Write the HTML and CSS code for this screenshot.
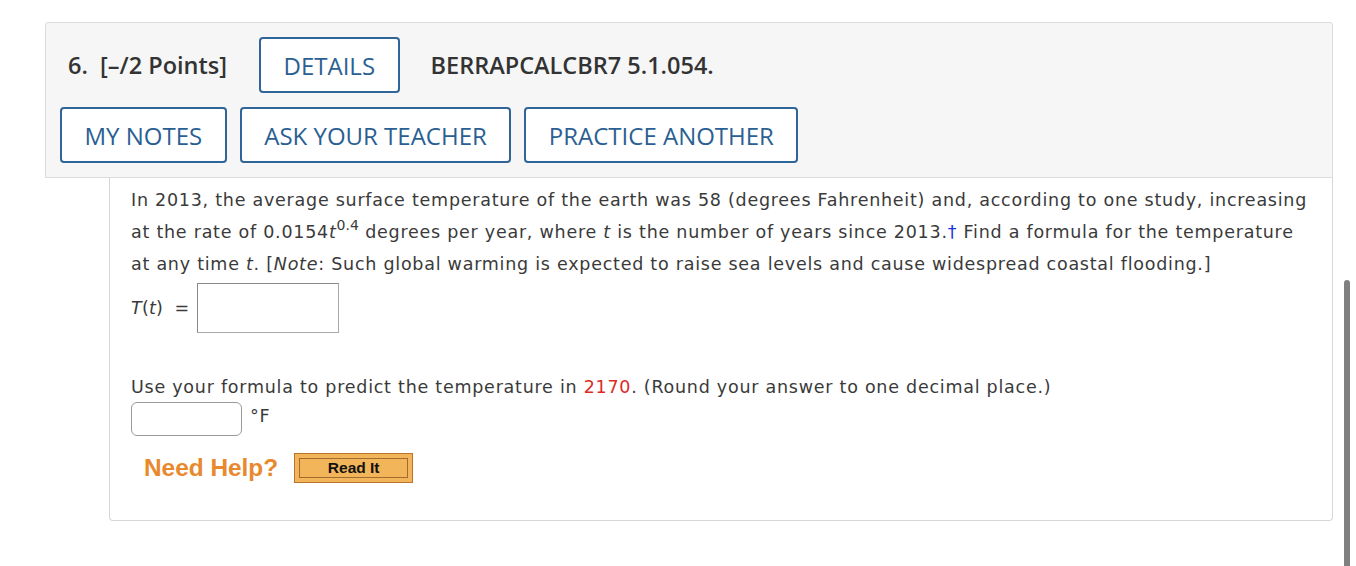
FILE: index.html
```html
<!DOCTYPE html>
<html>
<head>
<meta charset="utf-8">
<link rel="stylesheet" href="styles.css">
</head>
<body>
<div class="question">
  <div class="q-header">
    <div class="q-row">
      <span class="q-num">6.&nbsp; [–/2 Points]</span>
      <button class="btn">DETAILS</button>
      <span class="q-code">BERRAPCALCBR7 5.1.054.</span>
    </div>
    <div class="q-row q-actions">
      <button class="btn btn-notes">MY NOTES</button>
      <button class="btn">ASK YOUR TEACHER</button>
      <button class="btn">PRACTICE ANOTHER</button>
    </div>
  </div>
  <div class="q-body">
    <p class="q-text">In 2013, the average surface temperature of the earth was 58 (degrees Fahrenheit) and, according to one study, increasing at the rate of 0.0154<i>t</i><sup>0.4</sup> degrees per year, where <i>t</i> is the number of years since 2013.<span class="dagger">†</span> Find a formula for the temperature at any time <i>t</i>. [<i>Note</i>: Such global warming is expected to raise sea levels and cause widespread coastal flooding.]</p>
    <div class="formula-row">
      <span class="formula-label"><i>T</i>(<i>t</i>) &nbsp;=</span>
      <span class="answer-box"></span>
    </div>
    <p class="q-text q-part2">Use your formula to predict the temperature in <span class="red">2170</span>. (Round your answer to one decimal place.)</p>
    <div class="unit-row">
      <span class="small-box"></span>
      <span class="unit">°F</span>
    </div>
    <div class="help-row">
      <span class="need-help">Need Help?</span>
      <span class="read-it"><span class="read-it-inner">Read It</span></span>
    </div>
  </div>
</div>
<div class="scrollbar"></div>
</body>
</html>
```

FILE: styles.css
```css
html, body {
  margin: 0;
  padding: 0;
  background: #ffffff;
}

body {
  height: 566px;
  overflow: hidden;
}

.question {
  margin: 22px 0 0 45px;
  width: 1288px;
}

.q-header {
  background: #f6f6f6;
  border: 1px solid #dcdcdc;
  border-radius: 3px 3px 0 0;
  padding: 14px;
  display: flex;
  flex-direction: column;
  gap: 14px;
}

.q-row {
  display: flex;
  align-items: center;
}

.q-num {
  font-family: "Open Sans", sans-serif;
  font-weight: 600;
  font-size: 23.5px;
  color: #333333;
  margin-left: 8px;
  margin-right: 32px;
}

.q-code {
  font-family: "Open Sans", sans-serif;
  font-weight: 600;
  font-size: 23.5px;
  color: #333333;
  margin-left: 31px;
}

.q-actions {
  gap: 13px;
}

.btn {
  font-family: "Open Sans", sans-serif;
  font-weight: 500;
  font-size: 24px;
  color: #2b5f93;
  background: #ffffff;
  border: 2px solid #2f6598;
  border-radius: 4px;
  height: 56px;
  padding: 0 22.5px;
  margin: 0;
}

.q-body {
  margin-left: 64px;
  border: 1px solid #d6d6d6;
  border-top: none;
  border-radius: 0 0 4px 4px;
  padding: 6px 21px 37px 21px;
  font-family: "DejaVu Sans", Verdana, sans-serif;
  font-size: 17.5px;
  letter-spacing: 0.75px;
  color: #3a3a3a;
}

.q-text {
  margin: 0;
  line-height: 32px;
}

.q-text sup {
  font-size: 14px;
  letter-spacing: 0;
  line-height: 0;
  vertical-align: 8px;
}

.dagger {
  color: #1a33e0;
}

.red {
  color: #dc2a1f;
}

.formula-row {
  display: flex;
  align-items: center;
  margin-top: 3px;
}

.formula-label {
  margin-right: 8px;
  letter-spacing: 0.2px;
}

.answer-box {
  display: block;
  width: 140px;
  height: 48px;
  border: 1px solid #aaaaaa;
  border-top-color: #8a8a8a;
  border-left-color: #8a8a8a;
  background: #fff;
}

.q-part2 {
  margin-top: 38px;
}

.unit-row {
  display: flex;
  align-items: flex-start;
  margin-top: -1px;
}

.small-box {
  display: block;
  width: 109px;
  height: 32px;
  border: 1px solid #9a9a9a;
  border-radius: 6px;
  background: #fff;
}

.unit {
  margin-left: 8px;
  line-height: 24px;
  margin-top: 2px;
}

.help-row {
  display: flex;
  align-items: center;
  margin-top: 17px;
  margin-left: 13px;
}

.need-help {
  font-family: "Liberation Sans", Arial, sans-serif;
  font-weight: bold;
  font-size: 24.4px;
  letter-spacing: 0;
  color: #e8892e;
  margin-right: 16px;
}

.read-it {
  display: block;
  border: 1px solid #b8742c;
  background: #f2b55a;
  padding: 4px;
  box-sizing: border-box;
  width: 119px;
  height: 30px;
}

.read-it-inner {
  display: flex;
  align-items: center;
  justify-content: center;
  height: 100%;
  border: 1px solid #a26c30;
  box-sizing: border-box;
  font-family: "Liberation Sans", Arial, sans-serif;
  font-weight: bold;
  font-size: 15.5px;
  letter-spacing: 0;
  color: #111;
}

.scrollbar {
  position: fixed;
  left: 1344px;
  top: 280px;
  width: 6px;
  height: 300px;
  background: #808080;
  border-radius: 3px;
}
```
